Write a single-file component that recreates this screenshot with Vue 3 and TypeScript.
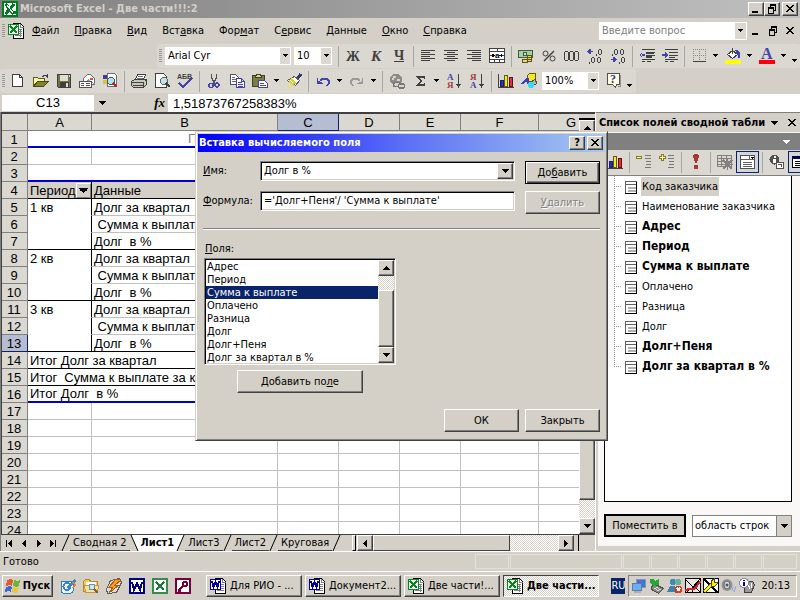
<script setup lang="ts">
import { ref } from 'vue'

type Tool = { kind: 'btn' | 'sep' | 'dd'; icon?: string; label?: string; on?: boolean }
type Row = { n: number; kind: string; a?: string; b?: string }
type Letter = { t: string; x: number; y: number; size: number; fill: string; sans?: boolean; italic?: boolean }

const b = (icon: string, label: string, on = false): Tool => ({ kind: 'btn', icon, label, on })
const sep: Tool = { kind: 'sep' }
const dd: Tool = { kind: 'dd' }

const blue = '#4444aa'
const red = '#a83838'
const ink = '#404040'

// Letters drawn over the tool icons that carry them
const letters: Record<string, Letter[]> = {
  bold: [{ t: 'Ж', x: 1, y: 13, size: 14, fill: ink }],
  italic: [{ t: 'К', x: 3, y: 13, size: 15, fill: ink, italic: true }],
  under: [{ t: 'Ч', x: 3, y: 12, size: 14, fill: ink }],
  spell: [{ t: 'АБВ', x: 0, y: 6, size: 7, fill: ink, sans: true }],
  sortaz: [{ t: 'А', x: 1, y: 7, size: 9, fill: blue }, { t: 'Я', x: 1, y: 15, size: 9, fill: red }],
  sortza: [{ t: 'Я', x: 1, y: 7, size: 9, fill: red }, { t: 'А', x: 1, y: 15, size: 9, fill: blue }],
  merge: [{ t: 'a', x: 6, y: 10, size: 8, fill: '#000', sans: true }],
  fontcolor: [{ t: 'А', x: 2, y: 11, size: 16, fill: blue }],
  help: [{ t: '?', x: 5, y: 10, size: 12, fill: '#3434a4' }],
}

const menus = [
  ['', 'Ф', 'айл'], ['', 'П', 'равка'], ['', 'В', 'ид'], ['Вст', 'а', 'вка'], ['Фор', 'м', 'ат'],
  ['С', 'е', 'рвис'], ['', 'Д', 'анные'], ['', 'О', 'кно'], ['', 'С', 'правка'],
]

const formatTools: Tool[] = [
  sep, b('bold', 'Полужирный'), b('italic', 'Курсив'), b('under', 'Подчеркнутый'), sep,
  b('left', 'По левому краю'), b('center', 'По центру'), b('right', 'По правому краю'), b('merge', 'Объединить'), sep,
  b('money', 'Денежный формат'), b('percent', 'Процентный формат'), b('thousands', 'Разделитель'),
  b('decinc', 'Увеличить разрядность'), b('decdec', 'Уменьшить разрядность'), sep,
  b('outdent', 'Уменьшить отступ'), b('indent', 'Увеличить отступ'), sep,
  b('borders', 'Границы'), dd, b('fill', 'Цвет заливки'), dd, b('fontcolor', 'Цвет шрифта'), dd,
]

const standardTools: Tool[] = [
  b('new', 'Создать'), b('open', 'Открыть'), b('save', 'Сохранить'), b('mail', 'Сообщение'), b('search', 'Поиск'), sep,
  b('print', 'Печать'), b('preview', 'Просмотр'), b('spell', 'Орфография'), sep,
  b('cut', 'Вырезать'), b('copy', 'Копировать'), b('paste', 'Вставить'), dd, b('brush', 'Формат по образцу'), sep,
  b('undo', 'Отменить'), dd, b('redo', 'Вернуть'), dd, sep,
  b('link', 'Гиперссылка'), b('sum', 'Автосумма'), dd, b('sortaz', 'По возрастанию'), b('sortza', 'По убыванию'), sep,
  b('chart', 'Мастер диаграмм'), b('draw', 'Рисование'),
]

const pivotTools: Tool[] = [
  b('chart', 'Сводная диаграмма'), sep, b('hide', 'Скрыть детали'), b('show', 'Показать детали'), sep,
  b('refresh', 'Обновить данные'), sep, b('hidden', 'Скрытые элементы'), b('always', 'Отображать элементы', true), sep,
  b('field', 'Параметры поля'), b('list', 'Список полей', true),
]

const columns = ['A', 'B', 'C', 'D', 'E', 'F', 'G']
const rows: Row[] = [
  { n: 1, kind: 'page', b: 'П' },
  { n: 2, kind: 'plain' },
  { n: 3, kind: 'merged' },
  { n: 4, kind: 'head', a: 'Период', b: 'Данные' },
  { n: 5, kind: 'data', a: '1 кв', b: 'Долг за квартал' },
  { n: 6, kind: 'data', b: ' Сумма к выплате' },
  { n: 7, kind: 'data groupend', b: 'Долг  в %' },
  { n: 8, kind: 'data', a: '2 кв', b: 'Долг за квартал' },
  { n: 9, kind: 'data', b: ' Сумма к выплате' },
  { n: 10, kind: 'data groupend', b: 'Долг  в %' },
  { n: 11, kind: 'data', a: '3 кв', b: 'Долг за квартал' },
  { n: 12, kind: 'data', b: ' Сумма к выплате' },
  { n: 13, kind: 'data groupend', b: 'Долг  в %' },
  { n: 14, kind: 'total', a: 'Итог Долг за квартал' },
  { n: 15, kind: 'total', a: 'Итог  Сумма к выплате за квартал' },
  { n: 16, kind: 'total end', a: 'Итог Долг  в %' },
  ...[17, 18, 19, 20, 21, 22, 23, 24].map((n) => ({ n, kind: 'plain' })),
]

const fields = ['Адрес', 'Период', 'Сумма к выплате', 'Оплачено', 'Разница', 'Долг', 'Долг+Пеня', 'Долг за квартал в %']
const selectedField = ref('Сумма к выплате')
const fieldName = ref('Долг в %')
const formula = ref("='Долг+Пеня'/ 'Сумма к выплате'")

const tree = [
  { text: 'Код заказчика', sel: true }, { text: 'Наименование заказчика' },
  { text: 'Адрес', bold: true }, { text: 'Период', bold: true }, { text: 'Сумма к выплате', bold: true },
  { text: 'Оплачено' }, { text: 'Разница' }, { text: 'Долг' },
  { text: 'Долг+Пеня', bold: true }, { text: 'Долг за квартал в %', bold: true },
]

const tabs = ['Сводная 2', 'Лист1', 'Лист3', 'Лист2', 'Круговая']
const activeTab = ref('Лист1')
const quick = ['outlook', 'explorer', 'winamp', 'wordq', 'excelq', 'accessq']
const tasks = [
  { icon: 'worddoc', text: 'Для РИО - ...' },
  { icon: 'worddoc', text: 'Документ2...' },
  { icon: 'exceldoc', text: 'Две части!...' },
  { icon: 'exceldoc', text: 'Две части...', on: true },
]
const tray = ['net', 'phone', 'msn', 'av1', 'av2', 'sound', 'info']
</script>

<template>
  <svg class="sprite" width="0" height="0" aria-hidden="true">
    <symbol id="dn" viewBox="0 0 7 4"><path d="M1 0h5v1h-1v1h-1v1h-1v-1h-1v-1h-1z" /></symbol>
    <symbol id="dnbig" viewBox="0 0 7 4"><path d="M0 0h7v1h-1v1h-1v1h-1v1h-1v-1h-1v-1h-1v-1h-1z" /></symbol>
    <symbol id="upbig" viewBox="0 0 7 4"><path d="M3 0h1v1h1v1h1v1h1v1h-7v-1h1v-1h1v-1h1z" /></symbol>
    <symbol id="lf" viewBox="0 0 4 7"><path d="M4 0v7h-1v-1h-1v-1h-1v-1h-1v-1h1v-1h1v-1h1v-1z" /></symbol>
    <symbol id="rt" viewBox="0 0 4 7"><path d="M0 0v7h1v-1h1v-1h1v-1h1v-1h-1v-1h-1v-1h-1v-1z" /></symbol>
    <symbol id="min" viewBox="0 0 12 12"><path d="M2 8h6v2h-6z" /></symbol>
    <symbol id="restore" viewBox="0 0 12 12"><path d="M4 1h6v7h-2v-1h1v-4h-4v1h-1zM2 4h6v7h-6zM3 6v4h4v-4z" fill-rule="evenodd" /></symbol>
    <symbol id="close" viewBox="0 0 12 12"><path d="M2 2h2v1h1v1h2v-1h1v-1h2v1h-1v1h-1v1h-1v1h1v1h1v1h1v1h-2v-1h-1v-1h-2v1h-1v1h-2v-1h1v-1h1v-1h1v-1h-1v-1h-1v-1h-1z" /></symbol>
    <symbol id="excel" viewBox="0 0 16 16"><path fill="#007c1f" d="M0 0h16v16h-16z" /><path fill="#fff" d="M2 2h12v12h-12z" /><path d="M3.500 3l8 10M12 3l-8.500 10" stroke="#007c1f" stroke-width="3" /><path d="M5 4l6 8" stroke="#fff" /><path fill="#007c1f" d="M11 10h3v3h-3z" /></symbol>
    <symbol id="exceldoc" viewBox="0 0 16 16"><path fill="#fff" stroke="#000" d="M5.500 .5h7l3 3v12h-10z" /><path stroke="#808080" d="M12.500 1v3h3M7 6.500h7M7 8.500h7M7 10.500h7M7 12.500h7M12.500 6v8" fill="none" /><path fill="#008a1c" d="M0 1h11v11h-11z" /><path fill="#fff" d="M1 2h9v9h-9z" /><path d="M2 3l7 7M9 3l-7 7" stroke="#008a1c" stroke-width="2" /></symbol>
    <symbol id="worddoc" viewBox="0 0 16 16"><path fill="#fff" stroke="#000" d="M5.500 .5h7l3 3v12h-10z" /><path stroke="#808080" d="M12.500 1v3h3M7 6.500h7M7 8.500h7M7 10.500h7M7 12.500h7" fill="none" /><path fill="#000098" d="M0 1h11v11h-11z" /><path fill="#fff" d="M1 2h9v9h-9z" /><path d="M2 3l1.500 6 2-5 2 5L9 3" stroke="#000098" stroke-width="2" fill="none" /></symbol>
    <symbol id="new" viewBox="0 0 16 16"><path fill="#fff" stroke="#404040" d="M2.500 1.500h7l3 3v9h-10zM9.500 1.500v3h3" /></symbol>
    <symbol id="open" viewBox="0 0 16 16"><path fill="#fbf7a0" stroke="#5a5a20" d="M.5 13.500v-9h4l1 1h6v3" /><path fill="#848430" stroke="#484810" d="M.5 13.500l4-5h11l-5 5z" /><path d="M9 3.500h1v-1h3v1h1v1h1M14.500 1v4" fill="none" stroke="#404040" /></symbol>
    <symbol id="save" viewBox="0 0 16 16"><path fill="#747440" stroke="#404040" d="M1.500 1.500h13v13h-12l-1-1z" /><path fill="#deded6" d="M4 2h8v6h-8z" /><path fill="#404040" d="M4 9h9v5h-9z" /><path fill="#dcdcdc" d="M10 10h2v4h-2zM13 2h1v2h-1z" /></symbol>
    <symbol id="mail" viewBox="0 0 16 16"><path fill="#fff" stroke="#707070" d="M4.500 5.500l4-4h3l4 4v6h-11z" /><path stroke="#999" d="M4.500 11l5-4 6 4" fill="none" /><path fill="#e44" d="M11 5h3v2h-3z" /><path fill="#fff" stroke="#505050" d="M.5 8.500h12v6h-12z" /><path d="M2 10.500h3M2 12.500h3M7 10.500h4M7 12.500h4" stroke="#505050" /></symbol>
    <symbol id="search" viewBox="0 0 16 16"><path fill="#fff" stroke="#707070" d="M5.500 .5h7l2 2v11h-9z" /><path fill="#3b3bb5" d="M1 2h4v4h-4z" /><path fill="#c04a30" d="M5 5h4v4h-4z" /><path fill="#cfc93b" d="M1 7h4v4h-4z" /><circle cx="9" cy="8" r="3.500" fill="#a8e8f4" stroke="#555" /><path d="M11 10l4 4" stroke="#c02030" stroke-width="2.500" /></symbol>
    <symbol id="print" viewBox="0 0 16 16"><path fill="#fff" stroke="#404040" d="M4.500 6.500l2-5h8l-2 5z" /><path stroke="#777" d="M7 3.500h5M6 5.500h6" /><path fill="#c8c6be" stroke="#404040" d="M.5 8.500l3-2h12v5l-3 3h-10l-2-2z" /><path d="M1 9.500h11M2 12.500h10M12.500 9v5M14 8l1-1" stroke="#404040" /><path fill="#cfc93b" d="M9 11h2v1h-2z" /></symbol>
    <symbol id="preview" viewBox="0 0 16 16"><path fill="#fff" stroke="#404040" d="M1.500 .5h8l3 3v11h-11z" /><circle cx="10" cy="8" r="3.500" fill="#bfe4ec" stroke="#606060" /><path d="M12 10l4 4" stroke="#404040" stroke-width="2.500" /></symbol>
    <symbol id="spell" viewBox="0 0 16 16"><path d="M2 10l4 4 9-9" fill="none" stroke="#4444aa" stroke-width="2" /></symbol>
    <symbol id="cut" viewBox="0 0 16 16"><path d="M5.500 1v4l4 6M10.500 1v4l-4 6" fill="none" stroke="#505058" stroke-width="1.500" /><circle cx="5" cy="12.500" r="2" fill="none" stroke="#4444aa" stroke-width="1.500" /><circle cx="11" cy="12" r="2" fill="none" stroke="#4444aa" stroke-width="1.500" /></symbol>
    <symbol id="copy" viewBox="0 0 16 16"><path fill="#fff" stroke="#505060" d="M1.500 1.500h5l3 3v7h-8z" /><path d="M3 4.500h3M3 6.500h5M3 8.500h5" stroke="#666" /><path fill="#fff" stroke="#4444aa" d="M7.500 5.500h5l3 3v6h-8zM12.500 5.500v3h3" /><path d="M9 9.500h4M9 11.500h5M9 13h5" stroke="#4444aa" /></symbol>
    <symbol id="paste" viewBox="0 0 16 16"><path fill="#7c7c48" stroke="#404028" d="M.5 2.500h12v11h-12z" /><path fill="#ddd68c" stroke="#404028" d="M3.500 3.500l1-2h4l1 2v1h-6z" /><path fill="#fff" stroke="#4444aa" d="M6.500 7.500h6l3 3v4h-9z" /><path d="M8 10.500h4M8 12.500h6" stroke="#4444aa" /></symbol>
    <symbol id="brush" viewBox="0 0 16 16"><path d="M15 1l-4 5" stroke="#34346c" stroke-width="3" /><path fill="#fff" stroke="#606060" d="M8.500 3.500l5 4-4 5-8-5z" /><path d="M5 6l5 5M3 8l5 4" stroke="#d8ce30" stroke-width="2" /><path d="M1 14.500h5M2 12.500h4" stroke="#f2e640" stroke-dasharray="2 1" /></symbol>
    <symbol id="undo" viewBox="0 0 16 16"><path fill="#4444aa" d="M2 5v6h6v-1h-1l-1-1h-1l-1-1h-1v-3z" /><path d="M5 8l2-2h5l2 2v2l-2 3" fill="none" stroke="#4444aa" stroke-width="1.500" /></symbol>
    <symbol id="redo" viewBox="0 0 16 16"><path fill="#999" d="M14 5v6h-6v-1h1l1-1h1l1-1h1v-3z" /><path d="M11 8l-2-2h-5l-2 2v2l2 3" fill="none" stroke="#999" stroke-width="1.500" /></symbol>
    <symbol id="link" viewBox="0 0 16 16"><circle cx="7" cy="6.500" r="6" fill="#8c8c88" /><path fill="#d8d5ce" d="M4 3h3v2h-2v2h-2zM8 6h3v2h-3z" /><rect x="4.500" y="9.500" width="7" height="4" rx="2" fill="#d8d5ce" stroke="#777" stroke-width="1.500" /><rect x="9.500" y="11" width="6" height="4" rx="2" fill="#d8d5ce" stroke="#777" stroke-width="1.500" /></symbol>
    <symbol id="sum" viewBox="0 0 16 16"><path d="M4 3h9v3h-1v-1h-5l3 3-3 3h5v-1h1v3h-9v-1l4-4-4-4z" fill="#404040" /></symbol>
    <symbol id="sortaz" viewBox="0 0 16 16"><path d="M12 1h1v10h2l-2.500 4-2.500-4h2z" fill="#404040" /></symbol>
    <symbol id="sortza" viewBox="0 0 16 16"><path d="M12 1h1v10h2l-2.500 4-2.500-4h2z" fill="#404040" /></symbol>
    <symbol id="chart" viewBox="0 0 16 16"><path d="M.5 1v13.500h15" stroke="#404040" fill="none" /><path fill="#2828d8" stroke="#202060" d="M2.500 7.500h3v6h-3z" /><path fill="#f4ec20" stroke="#605c10" d="M6.500 2.500h3v11h-3z" /><path fill="#e83030" stroke="#601010" d="M11.500 4.500h3v9h-3z" /></symbol>
    <symbol id="draw" viewBox="0 0 16 16"><path fill="#f6e824" stroke="#605c10" d="M6.500 2.500l2-2h6v5l-2 3h-6z" /><path fill="#3d3dc8" d="M0 11l5-6h3l1 6h-3v-2h-2l-1 2z" /><path fill="#b8b8b0" stroke="#505050" d="M11.500 7.500l3-1 1 4-3 2z" /><circle cx="10" cy="12" r="3" fill="#34dcf0" /></symbol>
    <symbol id="help" viewBox="0 0 16 16"><path fill="#fffde0" stroke="#505050" d="M2.500 .5h12v11h-3l-1 3-3-3h-5z" /><path d="M15.500 2v11h-3" stroke="#909090" fill="none" /></symbol>
    <symbol id="bold" viewBox="0 0 16 16" />
    <symbol id="italic" viewBox="0 0 16 16" />
    <symbol id="under" viewBox="0 0 16 16"><path d="M3 13.500h10" stroke="#404040" /></symbol>
    <symbol id="left" viewBox="0 0 16 16"><path d="M1 2.500h14M1 4.500h9M1 6.500h14M1 8.500h9M1 10.500h14M1 12.500h9" stroke="#404040" /></symbol>
    <symbol id="center" viewBox="0 0 16 16"><path d="M1 2.500h14M4 4.500h8M1 6.500h14M4 8.500h8M1 10.500h14M4 12.500h8" stroke="#404040" /></symbol>
    <symbol id="right" viewBox="0 0 16 16"><path d="M1 2.500h14M6 4.500h9M1 6.500h14M6 8.500h9M1 10.500h14M6 12.500h9" stroke="#404040" /></symbol>
    <symbol id="merge" viewBox="0 0 16 16"><path fill="#fff" stroke="#404040" d="M.5 .5h15v14h-15z" /><path d="M0 3.500h16M0 11.500h16M8.500 0v3M5.500 12v3M10.500 12v3M1 7.500h3M12 7.500h3" stroke="#404040" /><path d="M3 5.500l3 2-3 2zM13 5.500l-3 2 3 2z" /></symbol>
    <symbol id="money" viewBox="0 0 16 16"><path fill="#a7d0a0" stroke="#3b6040" d="M.5 2.500h14v7h-14z" /><circle cx="7" cy="6" r="2" fill="#dbd8d1" stroke="#3b6040" /><path fill="#e9dc60" stroke="#5c5418" d="M9.500 7.500h4v6h-4zM4.500 11.500h5v3h-5z" /><path d="M10 9.500h4M10 11.500h4" stroke="#5c5418" /></symbol>
    <symbol id="percent" viewBox="0 0 16 16"><g fill="none" stroke="#404040" shape-rendering="auto"><circle cx="4.500" cy="5.500" r="2.500" /><circle cx="11.500" cy="10.500" r="2.500" /><path d="M13 3l-10 10" stroke-width="1.500" /></g></symbol>
    <symbol id="thousands" viewBox="0 0 16 16"><g fill="none" stroke="#404040"><path d="M1.500 3.500h2v9h-2zM.5 4.500v7M4.500 4.500v7M6.500 3.500h2v9h-2zM5.500 4.500v7M9.500 4.500v7M11.500 3.500h2v9h-2z" stroke="none" /><path d="M1 3.500h3M1 12.500h3M.5 4v8M4.500 4v8M6 3.500h3M6 12.500h3M5.500 4v8M9.500 4v8M11 3.500h3M11 12.500h3M10.500 4v8M14.500 4v8" /></g></symbol>
    <symbol id="decinc" viewBox="0 0 16 16"><path d="M1 3h5v1h-5zM3 1h1v5h-1l-3-2.500z" fill="#4444aa" /><g fill="none" stroke="#404040"><path d="M12 1.500h2M12 6.500h2M11.500 2v4M14.500 2v4M5 9.500h2M5 14.500h2M4.500 10v4M7.500 10v4M11 9.500h2M11 14.500h2M10.500 10v4M13.500 10v4M9.500 6v2M2.500 14v2" /></g></symbol>
    <symbol id="decdec" viewBox="0 0 16 16"><path d="M1 11h5v1h-5zM3 9h1l3 2.500-3 2.500h-1z" fill="#4444aa" /><g fill="none" stroke="#404040"><path d="M5 1.500h2M5 6.500h2M4.500 2v4M7.500 2v4M11 1.500h2M11 6.500h2M10.500 2v4M13.500 2v4M12 9.500h2M12 14.500h2M11.500 10v4M14.500 10v4M2.500 6v2M9.500 14v2" /></g></symbol>
    <symbol id="outdent" viewBox="0 0 16 16"><path d="M3 1.500h13M3 13.500h3M7 4.500h9M7 7h9M7 9.500h6M3 11.500h13M8 13.500h4" stroke="#404040" /><path d="M7 4v1.500h8v-1.500zM7 7v2h6v-2z" fill="#404040" /><path d="M3 4l-3 3 3 3zM2 6h4v2h-4z" fill="#4444aa" /></symbol>
    <symbol id="indent" viewBox="0 0 16 16"><path d="M3 1.500h13M3 13.500h3M7 4.500h9M7 7h9M7 9.500h6M3 11.500h13M8 13.500h4" stroke="#404040" /><path d="M3 4l3 3-3 3zM0 6h4v2h-4z" fill="#4444aa" /></symbol>
    <symbol id="borders" viewBox="0 0 16 16"><path d="M2 1.500h13M2 7.500h13M2.500 1v12M8.500 1v12M14.500 1v12" stroke="#888" stroke-dasharray="1 1" /><path d="M2 13.500h13" stroke="#404040" /></symbol>
    <symbol id="fill" viewBox="0 0 16 16"><path fill="#fff" stroke="#404040" d="M2.500 6.500l5-4 5 4-5 4z" /><path d="M7.500 6v-6" stroke="#404040" /><path fill="#4444aa" d="M10 2h2l3 3v5h-2v-3z" /><path fill="#ff0" d="M0 12h16v4h-16z" /></symbol>
    <symbol id="fontcolor" viewBox="0 0 16 16"><path fill="#f00" d="M0 12h16v4h-16z" /></symbol>
    <symbol id="hide" viewBox="0 0 16 16"><path fill="#ffff80" stroke="#807c20" d="M.5 2.500h5v2h-5z" /><path d="M9 1.500h6M9 4.500h6M10 7.500h5M10 10.500h5M9 13.500h6" stroke="#777" /></symbol>
    <symbol id="show" viewBox="0 0 16 16"><path fill="#ffff80" stroke="#807c20" d="M2.500 .5h2v2h2v2h-2v2h-2v-2h-2v-2h2z" /><path d="M9 1.500h6M9 4.500h6M10 7.500h5M10 10.500h5M9 13.500h6" stroke="#777" /></symbol>
    <symbol id="refresh" viewBox="0 0 16 16"><path fill="#a83838" d="M6 0h4l1 2-2 7h-2l-2-7zM6 11h4v4h-4z" /></symbol>
    <symbol id="hidden" viewBox="0 0 16 16"><path fill="none" stroke="#808080" d="M.5 1.500h14v11h-14zM0 4.500h15M0 7.500h15M0 10.500h15M4.500 1v12M9.500 1v12" /><path d="M6 6l9 9M15 6l-9 9M10.500 5v11M5 10.500h11" stroke="#808080" stroke-width="1.500" /></symbol>
    <symbol id="always" viewBox="0 0 16 16"><path fill="#fff" stroke="#505050" d="M.5 1.500h14v13h-14z" /><path d="M1 5.500h14M3 8.500h9M3 10.500h9M3 12.500h9M9.500 1v4" stroke="#606060" /><path d="M11 3h3l-1.500 2z" /></symbol>
    <symbol id="field" viewBox="0 0 16 16"><circle cx="5.500" cy="5.500" r="5" fill="#505050" /><path fill="#fff" d="M5 2h2v2h-2zM4 5h3v4h-3z" /><path fill="#fff" stroke="#505050" d="M7.500 8.500h7v6h-7z" /><path d="M9 10h3v3" stroke="#505050" fill="none" /></symbol>
    <symbol id="list" viewBox="0 0 16 16"><path fill="#fff" stroke="#000" d="M.5 2.500h14v11h-14z" /><path fill="#00008c" d="M1 3h14v2h-14z" /><path d="M3 7.500h9M3 9.500h9M3 11.500h9" stroke="#000" /></symbol>
    <symbol id="fieldicon" viewBox="0 0 12 13"><path fill="#fff" stroke="#606060" d="M.5 .5h11v12h-11z" /><path d="M1 3.500h10" stroke="#606060" /><path d="M3 6.500h8M3 9.500h8" stroke="#b0b0b0" stroke-width="2" /><path d="M11.500 1v12M0 12.500h12" stroke="#000" /></symbol>
    <symbol id="flag" viewBox="0 0 16 16"><path fill="#e05a2c" d="M2 2l3-1 3 1-1 6-3-1-3 1z" /><path fill="#69b53a" d="M9 2l3 1 3-1-1 6-3 1-3-1z" /><path fill="#3a6ad8" d="M1 9l3-1 3 1-1 5-3-1-3 1z" /><path fill="#f2c230" d="M8 9l3 1 3-1-1 5-3 1-3-1z" /></symbol>
    <symbol id="outlook" viewBox="0 0 16 16"><rect x="1" y="3" width="12" height="12" rx="2" fill="#eaf4fc" stroke="#3878b8" /><circle cx="7" cy="8.500" r="3.500" fill="none" stroke="#3484cc" stroke-width="2" /><path d="M6 9l8-8 2 2-7 8z" fill="#3c84c8" /><path d="M13 4l2 3-2 3" fill="none" stroke="#e8882c" stroke-width="1.500" /></symbol>
    <symbol id="explorer" viewBox="0 0 16 16"><path fill="#f3c860" stroke="#b88828" d="M.5 3.500l2-2h4l1 2h7v10h-14z" /><path fill="#fff" d="M3 4h10v4h-10z" /><path fill="#fbe09c" stroke="#c89838" d="M1.500 7.500h14l-1 7h-12z" /><circle cx="9" cy="9" r="3" fill="#c8e8fc" stroke="#6890b0" /><path d="M11 11l4 4" stroke="#806030" stroke-width="2" /></symbol>
    <symbol id="winamp" viewBox="0 0 16 16"><path fill="#ddd" stroke="#606060" d="M4.500 2.500l9-2 2 4-5 10-9 1-1-4z" /><path fill="#f6a020" stroke="#b05810" d="M10 1l-7 8h4l-4 6 10-8h-4l6-5z" /></symbol>
    <symbol id="wordq" viewBox="0 0 16 16"><path fill="#000080" d="M0 0h16v16h-16z" /><path fill="#fff" d="M2 2h12v12h-12z" /><path d="M3 4l2 8 3-7 3 7 2-8" stroke="#000080" stroke-width="2" fill="none" /></symbol>
    <symbol id="excelq" viewBox="0 0 16 16"><path fill="#3a8a50" d="M0 0h16v16h-16z" /><path fill="#fff" d="M2 2h12v12h-12z" /><path d="M4 4l8 8M12 4l-8 8" stroke="#207838" stroke-width="2" /></symbol>
    <symbol id="accessq" viewBox="0 0 16 16"><path fill="#78003c" d="M0 0h16v16h-16z" /><path fill="#fff" d="M2 2h12v12h-12z" /><circle cx="10" cy="6" r="2" fill="none" stroke="#78003c" stroke-width="2" /><path d="M8 8l-4 4v1h2" stroke="#78003c" stroke-width="2" fill="none" /></symbol>
    <symbol id="net" viewBox="0 0 16 16"><path fill="#3a74dc" stroke="#8894b4" d="M5.500 1.500h9v8h-9z" /><path fill="#68b0f4" stroke="#6a78a0" d="M1.500 5.500h9v7h-9z" /><path fill="#a8b0c4" d="M3 13h7v2h-7z" /></symbol>
    <symbol id="phone" viewBox="0 0 16 16"><path fill="#888" stroke="#505050" d="M2.500 8.500l4-2 8 4-5 5-7-4z" /><path d="M5 10l5 3M7 9l5 3" stroke="#ddd" /><path fill="#24a834" d="M1 1h3l2 2 4-2v6l-6 1-3-3z" /></symbol>
    <symbol id="msn" viewBox="0 0 16 16"><circle cx="6" cy="4" r="3" fill="#3c8cb8" /><circle cx="11" cy="4" r="3" fill="#68b098" /><path fill="#3c84b0" d="M0 14l3-6h5l3 6z" /><circle cx="11.500" cy="11.500" r="4" fill="#e03424" /><path d="M10 10l3 3M13 10l-3 3" stroke="#fff" stroke-width="1.500" /></symbol>
    <symbol id="av1" viewBox="0 0 16 16"><path fill="#e8e6e0" stroke="#000" d="M.5 .5h15v14h-15z" /><path d="M1 2l7 7M15 1l-8 9v5M2 14l4-4M10 9l5 5" stroke="#000" /><path d="M0 12l5-1 4 0 7-8" stroke="#e02020" stroke-width="2" fill="none" /></symbol>
    <symbol id="av2" viewBox="0 0 16 16"><path fill="#fff" stroke="#000" d="M.5 .5h15v14h-15z" /><path d="M1 1l14 14" stroke="#000" stroke-width="2" /><path d="M1 14l9-9" stroke="#504c00" stroke-width="4" /><path d="M1 14l9-9" stroke="#ffee10" stroke-width="2.500" /><path fill="#ffee10" stroke="#504c00" d="M8 3l3-2v3h3l1 1-3 3h-4z" /></symbol>
    <symbol id="sound" viewBox="0 0 16 16"><g shape-rendering="auto"><ellipse cx="6" cy="7" rx="5.500" ry="6" fill="#909498" /><ellipse cx="6" cy="7" rx="3" ry="4" fill="#d8dce0" stroke="#606468" /><circle cx="6" cy="7" r="1.500" fill="#505458" /><path d="M12 9l-1 4M15 8l-2 6" stroke="#88a0f0" /></g></symbol>
    <symbol id="info" viewBox="0 0 16 16"><path fill="#9a9a9a" stroke="#404040" d="M6.500 3.500h7l2 3-3 8h-7z" /><path d="M9 6l2 5M12 5l1 5" stroke="#fff" /><circle cx="5" cy="5" r="4.500" fill="#fff" stroke="#8888b8" /><path d="M4 2h2v1h-2zM4 4h2v4h-2z" fill="#0000d0" /></symbol>
  </svg>

  <main class="desktop">
    <header class="titlebar">
      <svg class="ic"><use href="#excel" /></svg>
      <h1>Microsoft Excel - Две части!!!:2</h1>
      <div class="winbtns">
        <button class="cap" aria-label="Свернуть"><svg><use href="#min" /></svg></button>
        <button class="cap" aria-label="Восстановить"><svg><use href="#restore" /></svg></button>
        <button class="cap apart" aria-label="Закрыть"><svg><use href="#close" /></svg></button>
      </div>
    </header>

    <nav class="menubar">
      <i class="grip" />
      <svg class="ic docicon"><use href="#exceldoc" /></svg>
      <button v-for="m in menus" :key="m.join('')" class="menu">{{ m[0] }}<u>{{ m[1] }}</u>{{ m[2] }}</button>
      <div class="ask">
        <input type="text" placeholder="Введите вопрос" aria-label="Введите вопрос">
        <span class="arrow"><svg class="dn"><use href="#dn" /></svg></span>
      </div>
      <div class="docbtns">
        <button aria-label="Свернуть окно"><svg><use href="#min" /></svg></button>
        <button aria-label="Восстановить окно"><svg><use href="#restore" /></svg></button>
        <button aria-label="Закрыть окно"><svg><use href="#close" /></svg></button>
      </div>
    </nav>

    <div class="toolbar formatting">
      <i class="grip" />
      <div class="combo font"><select aria-label="Шрифт"><option>Arial Cyr</option></select><span class="arrow"><svg class="dn"><use href="#dn" /></svg></span></div>
      <div class="combo size"><select aria-label="Размер"><option>10</option></select><span class="arrow"><svg class="dn"><use href="#dn" /></svg></span></div>
      <template v-for="(t, i) in formatTools" :key="i">
        <i v-if="t.kind === 'sep'" class="tsep" />
        <button v-else-if="t.kind === 'dd'" class="tdd" aria-label="Еще"><svg class="dn"><use href="#dn" /></svg></button>
        <button v-else class="tbtn" :aria-label="t.label"><svg class="ic" viewBox="0 0 16 16"><use :href="'#' + t.icon" /><text v-for="g in letters[t.icon!]" :key="g.t" :x="g.x" :y="g.y" :font-size="g.size" :fill="g.fill" :class="['gl', { sans: g.sans, italic: g.italic }]">{{ g.t }}</text></svg></button>
      </template>
      <button class="tdd more" aria-label="Параметры панели"><svg class="dn"><use href="#dn" /></svg></button>
    </div>

    <div class="toolbar standard">
      <i class="grip" />
      <template v-for="(t, i) in standardTools" :key="i">
        <i v-if="t.kind === 'sep'" class="tsep" />
        <button v-else-if="t.kind === 'dd'" class="tdd" aria-label="Еще"><svg class="dn"><use href="#dn" /></svg></button>
        <button v-else class="tbtn" :aria-label="t.label"><svg class="ic" viewBox="0 0 16 16"><use :href="'#' + t.icon" /><text v-for="g in letters[t.icon!]" :key="g.t" :x="g.x" :y="g.y" :font-size="g.size" :fill="g.fill" :class="['gl', { sans: g.sans, italic: g.italic }]">{{ g.t }}</text></svg></button>
      </template>
      <div class="combo zoom"><select aria-label="Масштаб"><option>100%</option></select><span class="arrow"><svg class="dn"><use href="#dn" /></svg></span></div>
      <button class="tbtn" aria-label="Справка"><svg class="ic" viewBox="0 0 16 16"><use href="#help" /><text v-for="g in letters.help" :key="g.t" :x="g.x" :y="g.y" :font-size="g.size" :fill="g.fill" class="gl">{{ g.t }}</text></svg></button>
      <button class="tdd more" aria-label="Параметры панели"><svg class="dn"><use href="#dn" /></svg></button>
    </div>

    <div class="formulabar">
      <input class="namebox" type="text" value="C13" aria-label="Имя ячейки">
      <button class="namedd" aria-label="Список имен"><svg class="dnbig"><use href="#dnbig" /></svg></button>
      <button class="fx" aria-label="Вставка функции"><em>fx</em></button>
      <input class="fvalue" type="text" value="1,51873767258383%" aria-label="Строка формул">
    </div>

    <div class="work">
      <section class="book">
        <div class="sheetrow">
          <div class="sheet">
            <table>
              <colgroup><col class="c0"><col class="ca"><col class="cb"><col class="cc"><col class="cc"><col class="cc"><col class="cf"><col></colgroup>
              <thead>
                <tr><th /><th v-for="c in columns" :key="c" :class="{ cur: c === 'C' }">{{ c }}</th></tr>
              </thead>
              <tbody>
                <tr v-for="r in rows" :key="r.n" :class="r.kind">
                  <th :class="{ cur: r.n === 13 }">{{ r.n }}</th>
                  <td v-if="r.kind === 'page'" colspan="7" class="pagefield">{{ r.b }}</td>
                  <td v-else-if="r.kind === 'merged'" colspan="7" />
                  <td v-else-if="r.kind.startsWith('total')" colspan="7">{{ r.a }}</td>
                  <template v-else>
                    <td class="a"><span v-if="r.kind === 'head'" class="pivothead">{{ r.a }}<button aria-label="Фильтр"><svg class="dnhead"><use href="#dnbig" /></svg></button></span><template v-else>{{ r.a }}</template></td>
                    <td>{{ r.b }}</td><td v-for="k in 5" :key="k" />
                  </template>
                </tr>
              </tbody>
            </table>
          </div>
          <div class="vscroll">
            <i class="split" />
            <button class="sb" aria-label="Вверх"><svg class="dnbig"><use href="#upbig" /></svg></button>
            <i class="thumb" />
            <button class="sb down" aria-label="Вниз"><svg class="dnbig"><use href="#dnbig" /></svg></button>
          </div>
        </div>
        <div class="tabrow">
          <button class="nav tofirst" aria-label="Первый лист"><svg class="side"><use href="#lf" /></svg></button>
          <button class="nav" aria-label="Предыдущий лист"><svg class="side"><use href="#lf" /></svg></button>
          <button class="nav" aria-label="Следующий лист"><svg class="side"><use href="#rt" /></svg></button>
          <button class="nav tolast" aria-label="Последний лист"><svg class="side"><use href="#rt" /></svg></button>
          <div class="tabs">
            <template v-for="(t, i) in tabs" :key="t">
              <svg class="slash" viewBox="0 0 9 16"><path v-if="t === activeTab" d="M1 0h8v16h-1z" fill="#fff" /><path v-else-if="tabs[i - 1] === activeTab" d="M0 0h8L1 16H0z" fill="#fff" /><path :d="t === activeTab ? 'M1 0l7 16' : 'M1 16L8 0'" stroke="#000" /></svg>
              <button class="tab" :class="{ on: t === activeTab }" @click="activeTab = t">{{ t }}</button>
            </template>
            <svg class="slash" viewBox="0 0 9 16"><path d="M1 16L8 0" stroke="#000" /></svg>
          </div>
          <i class="hsplit" />
          <button class="sb" aria-label="Влево"><svg class="side"><use href="#lf" /></svg></button>
          <div class="htrack"><i class="hthumb" /></div>
          <button class="sb" aria-label="Вправо"><svg class="side"><use href="#rt" /></svg></button>
          <i class="hend" />
          <i class="corner" />
        </div>
      </section>

      <aside class="pane">
        <div class="panetitle"><h2>Список полей сводной табли</h2><svg class="dnbig"><use href="#dnbig" /></svg><button aria-label="Закрыть список"><svg class="x"><use href="#close" /></svg></button></div>
        <div class="panebody">
          <div class="pivotbar">
            <div class="pivottitle"><svg class="dnbig"><use href="#dnbig" /></svg></div>
            <div class="pivottools">
              <template v-for="(t, i) in pivotTools" :key="i">
                <i v-if="t.kind === 'sep'" class="tsep" />
                <button v-else class="tbtn" :class="{ on: t.on }" :aria-label="t.label"><svg class="ic"><use :href="'#' + t.icon" /></svg></button>
              </template>
            </div>
          </div>
          <ul class="tree">
            <li v-for="n in tree" :key="n.text" :class="{ bold: n.bold, sel: n.sel }"><svg class="fi"><use href="#fieldicon" /></svg><span>{{ n.text }}</span></li>
          </ul>
          <div class="place">
            <button>Поместить в</button>
            <div class="combo area"><select aria-label="Область"><option>область строк</option></select><span class="arrow"><svg class="dnbig"><use href="#dnbig" /></svg></span></div>
          </div>
        </div>
      </aside>
    </div>

    <footer class="status"><span>Готово</span><i class="s1" /><i class="s2" /><i /><i /><i /><i /><i /><i class="s1" /></footer>

    <div class="taskbar">
      <button class="start"><svg class="ic"><use href="#flag" /></svg>Пуск</button>
      <div class="quick"><button v-for="q in quick" :key="q" :aria-label="q"><svg class="ic"><use :href="'#' + q" /></svg></button></div>
      <button v-for="t in tasks" :key="t.text" class="task" :class="{ on: t.on }"><svg class="ic"><use :href="'#' + t.icon" /></svg>{{ t.text }}</button>
      <span class="lang">RU</span>
      <div class="tray"><svg v-for="t in tray" :key="t" class="ic"><use :href="'#' + t" /></svg><time>20:13</time></div>
    </div>

    <section class="dialog" role="dialog" aria-labelledby="dlg-title">
      <div class="dlgtitle">
        <h2 id="dlg-title">Вставка вычисляемого поля</h2>
        <button class="cap q" aria-label="Что это такое?">?</button>
        <button class="cap" aria-label="Закрыть"><svg><use href="#close" /></svg></button>
      </div>
      <form class="dlgbody" @submit.prevent>
        <div class="line">
          <label for="fname"><u>И</u>мя:</label>
          <div class="sunken"><input id="fname" v-model="fieldName" type="text"><button type="button" class="sb" aria-label="Раскрыть"><svg class="dnbig"><use href="#dnbig" /></svg></button></div>
          <button class="push default">До<u>б</u>авить</button>
        </div>
        <div class="line">
          <label for="fformula"><u>Ф</u>ормула:</label>
          <div class="sunken"><input id="fformula" v-model="formula" type="text"></div>
          <button class="push" disabled><u>У</u>далить</button>
        </div>
        <hr>
        <label class="fieldslabel" for="ffields"><u>П</u>оля:</label>
        <div class="sunken listbox">
          <select id="ffields" v-model="selectedField" size="8"><option v-for="f in fields" :key="f">{{ f }}</option></select>
          <div class="lscroll">
            <button type="button" class="sb" aria-label="Вверх"><svg class="dnbig"><use href="#upbig" /></svg></button>
            <i class="thumb" />
            <button type="button" class="sb" aria-label="Вниз"><svg class="dnbig"><use href="#dnbig" /></svg></button>
          </div>
        </div>
        <button type="button" class="push addfield">Добавить по<u>л</u>е</button>
        <div class="actions"><button type="button" class="push">ОК</button><button type="button" class="push">Закрыть</button></div>
      </form>
    </section>
  </main>
</template>

<style>
body { margin: 0; overflow: hidden; background: #d4d0c8; }
</style>

<style scoped>
* { box-sizing: border-box; }
.sprite { position: absolute; }
svg { display: block; flex: none; shape-rendering: crispEdges; }
.gl { font-family: "Liberation Serif", serif; font-weight: bold; }
.gl.sans { font-family: "Liberation Sans", sans-serif; }
.gl.italic { font-style: italic; }
button, input, select { margin: 0; padding: 0; border: 0; border-radius: 0; font: inherit; color: inherit; background: none; outline: 0; }
button { display: flex; align-items: center; justify-content: center; flex: none; white-space: pre; }
select { appearance: none; }
h1, h2 { margin: 0; font-size: 11px; font-weight: bold; white-space: nowrap; }
.ic { width: 16px; height: 16px; }
.dn, .dnbig { width: 7px; height: 4px; }
.side { width: 4px; height: 7px; }

.desktop { position: relative; display: flex; flex-direction: column; height: 100vh; overflow: hidden; background: #d4d0c8; color: #000; font: 11px/14px "DejaVu Sans Condensed", "DejaVu Sans", sans-serif; }

.titlebar { display: flex; align-items: center; gap: 2px; height: 18px; flex: none; padding: 0 2px; background: linear-gradient(to right, #808080, #c0c0c0); color: #d4d0c8; }
.winbtns { display: flex; margin-left: auto; color: #000; }
.cap { width: 16px; height: 14px; background: #d4d0c8; border: 1px solid; border-color: #fff #404040 #404040 #fff; box-shadow: inset -1px -1px #808080; font-weight: bold; color: #000; }
.cap svg { width: 12px; height: 12px; }
.apart { margin-left: 2px; }

.menubar { display: flex; align-items: center; height: 26px; flex: none; padding: 0 4px 0 2px; }
.grip { width: 3px; height: 14px; flex: none; background: repeating-linear-gradient(#999 0 1px, transparent 1px 2px); }
.docicon { margin: 0 1px 0 3px; }
.menu { padding: 0 8px 0 7px; }
.ask { display: flex; width: 148px; height: 18px; margin-left: auto; padding: 1px; background: #fff; }
.ask input { flex: 1; min-width: 0; padding-left: 2px; }
.ask input::placeholder { color: #808080; }
.arrow { display: flex; align-items: center; justify-content: center; width: 11px; flex: none; background: #dbd8d1; pointer-events: none; }
.docbtns { display: flex; gap: 5px; margin-left: 3px; }
.docbtns svg { width: 12px; height: 12px; }

.toolbar { display: flex; align-items: center; height: 24px; flex: none; margin-bottom: 1px; background: #dbd8d1; border-radius: 3px; }
.formatting { margin-left: 157px; padding-left: 2px; }
.standard { align-self: flex-start; padding: 0 1px 0 2px; }
.standard .grip { margin-right: 1px; }
.tbtn { width: 23px; height: 22px; }
.tsep { display: block; width: 6px; height: 21px; flex: none; background: linear-gradient(#a6a6a6, #a6a6a6) 3px 0 / 1px 100% no-repeat; }
.tdd { width: 11px; height: 22px; }
.more { align-items: flex-end; padding-bottom: 4px; }
.combo { display: flex; flex: none; height: 18px; background: #fff; padding: 1px; }
.combo select { flex: 1; min-width: 0; padding-left: 2px; }
.font { width: 126px; margin: 0 3px; }
.size { width: 38px; margin-right: 3px; }
.zoom { width: 57px; margin: 0 2px; }
.font .arrow, .size .arrow, .zoom .arrow { width: 10px; }

.formulabar { display: flex; align-items: center; height: 18px; flex: none; font: 13px/16px "Liberation Sans", sans-serif; }
.namebox { width: 92px; height: 16px; margin-left: 2px; background: #fff; text-align: center; }
.namedd { width: 17px; height: 16px; }
.fx { width: 57px; height: 16px; justify-content: flex-end; padding-right: 3px; font: bold 13px/16px "Liberation Serif", serif; }
.fvalue { flex: 1; height: 18px; padding-left: 5px; background: #fff; }

.work { display: flex; flex: 1; min-height: 0; }
.book { flex: 1; min-width: 0; display: flex; flex-direction: column; border-left: 1px solid #808080; }
.sheetrow { display: flex; flex: 1; min-height: 0; border-top: 2px solid #404040; }
.sheet { flex: 1; min-width: 0; overflow: hidden; background: #fff; border-left: 1px solid #404040; }
table { width: 100%; table-layout: fixed; border-spacing: 0; font: 13px/15px "Liberation Sans", sans-serif; }
.c0 { width: 26px; }
.ca { width: 64px; }
.cb { width: 186px; }
.cc { width: 61px; }
.cf { width: 78px; }
th { height: 17px; padding: 0; font-weight: normal; background: #dbd8d1; border: solid #808080; border-width: 0 1px 1px 0; }
th.cur { background: #b6bdd2; border-color: #0a246a; }
thead th:last-child { padding-left: 24px; border-right: 0; }
tbody th { padding-right: 1px; }
td { height: 17px; padding: 0 0 0 2px; white-space: pre; overflow: hidden; border: solid #c0c0c0; border-width: 0 1px 1px 0; }
td:last-child { border-right: 0; }
.page td, .merged td, .end td { border-bottom: 2px solid #0000c8; }
.page td, .merged td, .end td { line-height: 14px; }
.pagefield { padding-left: 160px; color: #808080; }
.head td { background: #d4d0c8; border-bottom-color: #000; }
.head .a, .data .a { border-right-color: #000; }
.data .a { border-bottom-color: #fff; }
.groupend td, .groupend .a, .total td { border-bottom-color: #000; }
.end td { border-bottom-color: #0000c8; }
.pivothead { display: flex; justify-content: space-between; }
.pivothead button { width: 15px; height: 15px; border: 1px solid; border-color: #fff #808080 #808080 #fff; }
.dnhead { width: 9px; height: 5px; }

.vscroll, .lscroll { display: flex; flex-direction: column; width: 16px; flex: none; }
.vscroll, .lscroll, .htrack { background: repeating-conic-gradient(#fff 0 25%, #d4d0c8 0 50%) 0 0 / 2px 2px; }
.split { height: 6px; background: #d4d0c8; border-bottom: 2px solid #000; }
.sb { width: 16px; height: 16px; background: #d4d0c8; border: 1px solid; border-color: #fff #404040 #404040 #fff; box-shadow: inset -1px -1px #808080; }
.thumb { background: #d4d0c8; border: 1px solid; border-color: #fff #404040 #404040 #fff; box-shadow: inset -1px -1px #808080; }
.vscroll .thumb { flex: 1; margin-bottom: 18px; }

.tabrow { display: flex; height: 17px; flex: none; border-top: 1px solid #404040; }
.nav { width: 15px; height: 16px; }
.tofirst::before, .tolast::after { content: ""; width: 1px; height: 7px; margin: 0 1px; background: #000; }
.tabs { display: flex; width: 291px; flex: none; }
.tab { padding: 0 3px; height: 16px; border-bottom: 1px solid #404040; }
.tab.on { background: #fff; font-weight: bold; border-bottom-color: #fff; padding: 0 2px; }
.slash { width: 9px; height: 16px; shape-rendering: auto; }
.hsplit { width: 4px; margin-right: 1px; background: #d4d0c8; border: 1px solid; border-color: #fff #000 #000 #fff; }
.htrack { flex: 1; display: flex; }
.hthumb { width: 74%; background: #d4d0c8; border: 1px solid; border-color: #fff #404040 #404040 #fff; }
.hend { width: 5px; border-right: 1px solid #000; }
.corner { width: 16px; }

.pane { width: 205px; flex: none; display: flex; flex-direction: column; padding-left: 2px; border-left: 1px solid #fff; border-top: 1px solid #808080; }
.panetitle { display: flex; align-items: center; height: 19px; flex: none; padding: 0 2px 0 1px; }
.panetitle h2 { flex: 1; min-width: 0; overflow: hidden; }
.panetitle button { margin-left: 8px; }
.x { width: 12px; height: 12px; }
.panebody { flex: 1; min-height: 0; display: flex; flex-direction: column; background: #faf8f6; padding-top: 1px; margin-bottom: 5px; }
.pivottitle { display: flex; align-items: center; height: 17px; padding-right: 10px; justify-content: flex-end; background: #808080; color: #fff; }
.pivottitle svg, .dn, .dnbig { fill: currentColor; }
.pivottools { display: flex; align-items: center; height: 26px; padding: 0 0 1px 5px; overflow: hidden; background: #dbd8d1; border-bottom: 1px solid #808080; }
.tbtn.on { background: #d4d5d8; border: 1px solid #0a246a; }
.tree { flex: 1; min-height: 0; margin: 0 8px 0 6px; padding: 0 0 0 9px; list-style: none; background: #fff; border: 1px solid #000; border-top: 0; }
.tree li { display: flex; align-items: center; height: 20px; background: repeating-linear-gradient(90deg, #999 0 1px, transparent 1px 2px) 0 10px / 8px 1px no-repeat, repeating-linear-gradient(#999 0 1px, transparent 1px 2px) 0 0 / 1px 100% no-repeat; }
.tree li:last-child { background-size: 8px 1px, 1px 10px; }
.fi { width: 12px; height: 13px; margin: 3px 4px 0 11px; }
.tree span { padding: 1px; line-height: 17px; white-space: nowrap; }
.sel span { background: #d4d0c8; }
.bold span { font-weight: bold; font-size: 12px; }
.place { display: flex; align-items: center; gap: 6px; flex: none; padding: 12px 8px 9px 6px; }
.place button { width: 82px; height: 23px; background: #d4d0c8; border: 2px solid #000; }
.area { flex: 1; height: 22px; border: 1px solid #808080; padding: 0; }
.area .arrow { width: 15px; border-left: 1px solid #808080; background: #d4d0c8; }

.status { display: flex; align-items: center; gap: 1px; height: 20px; flex: none; padding: 0 3px; border-top: 1px solid #fff; }
.status span { flex: 1; }
.status i { width: 27px; height: 15px; border: 1px solid #e4e1da; }
.status .s1 { width: 34px; }
.status .s2 { width: 112px; }

.taskbar { display: flex; align-items: center; height: 29px; flex: none; padding: 2px 3px 3px 2px; border-top: 1px solid #fff; }
.start, .task { height: 22px; border: 1px solid; border-color: #fff #404040 #404040 #fff; box-shadow: inset -1px -1px #808080; }
.start { width: 51px; gap: 2px; font-weight: bold; }
.quick { display: flex; gap: 7px; margin: 0 15px 0 7px; }
.task { width: 96px; margin-right: 3px; padding-left: 3px; gap: 4px; justify-content: flex-start; overflow: hidden; }
.task.on { font-weight: bold; border-color: #404040 #fff #fff #404040; box-shadow: none; background: repeating-conic-gradient(#fff 0 25%, #d4d0c8 0 50%) 0 0 / 2px 2px; }
.lang { width: 14px; height: 16px; margin-left: auto; overflow: hidden; background: #0a246a; color: #fff; line-height: 16px; text-align: center; }
.tray { display: flex; align-items: center; gap: 2px; height: 22px; margin-left: 3px; padding: 0 6px 0 2px; border: 1px solid; border-color: #808080 #fff #fff #808080; }
.tray time { margin-left: 4px; }

.dialog { position: absolute; left: 195px; top: 131px; width: 413px; background: #d4d0c8; padding: 2px; border: 1px solid; border-color: #d4d0c8 #404040 #404040 #d4d0c8; box-shadow: inset 1px 1px #fff, inset -1px -1px #808080; }
.dlgtitle { display: flex; align-items: center; height: 18px; padding: 0 2px 0 1px; background: linear-gradient(to right, #0000ff, #5a6ef5 50%, #a6caf0); color: #fff; }
.dlgtitle h2 { flex: 1; }
.q { margin-right: 2px; }
.dlgbody { padding: 9px 5px 6px; }
.line { display: flex; align-items: flex-start; margin-bottom: 7px; }
.line label { width: 57px; line-height: 20px; }
.line .sunken { flex: 1; margin-right: 10px; }
.sunken { display: flex; height: 20px; background: #fff; border: 1px solid; border-color: #808080 #fff #fff #808080; box-shadow: inset 1px 1px #000, inset -1px -1px #d4d0c8; padding: 1px; }
.sunken input { flex: 1; min-width: 0; padding-left: 2px; }
.push { width: 75px; height: 23px; background: #d4d0c8; border: 1px solid; border-color: #fff #404040 #404040 #fff; box-shadow: inset -1px -1px #808080; }
.push.default { border-color: #000; box-shadow: inset 1px 1px #fff, inset -1px -1px #404040, inset -2px -2px #808080; }
.push:disabled { color: #808080; text-shadow: 1px 1px #fff; }
hr { height: 2px; margin: 14px 0 12px; border: 0; border-top: 1px solid #808080; border-bottom: 1px solid #fff; }
.fieldslabel { display: block; margin: 0 0 2px 2px; }
.listbox { width: 192px; height: 107px; margin-left: 1px; }
.listbox select { flex: 1; min-width: 0; overflow: hidden; font-size: 11px; }
.listbox option { min-height: 13px; height: 13px; padding: 0 1px; line-height: 13px; color: #000; }
.listbox option:checked { background: linear-gradient(#0a246a, #0a246a); color: #fff; -webkit-text-fill-color: #fff; }
.lscroll .thumb { flex: 1; margin-top: 14px; }
.addfield { width: 126px; margin: 5px 0 0 34px; }
.actions { display: flex; justify-content: flex-end; gap: 6px; margin-top: 16px; }
</style>
